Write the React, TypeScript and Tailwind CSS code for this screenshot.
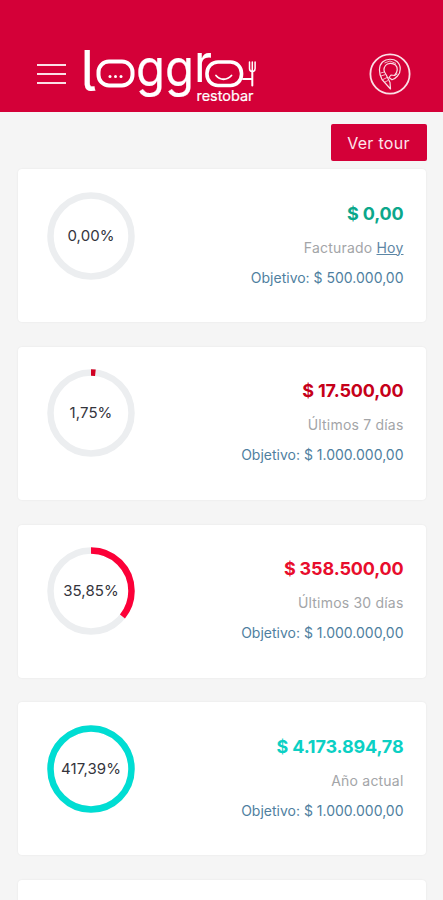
import React from "react";

type Goal = {
  percent: number;
  percentText: string;
  amount: string;
  label: string;
  link?: string;
  goal: string;
  amountClass: string;
  ringColor: string;
};

const goals: Goal[] = [
  {
    percent: 0,
    percentText: "0,00%",
    amount: "$ 0,00",
    label: "Facturado",
    link: "Hoy",
    goal: "$ 500.000,00",
    amountClass: "text-[#0ba78b]",
    ringColor: "#0ba78b",
  },
  {
    percent: 1.75,
    percentText: "1,75%",
    amount: "$ 17.500,00",
    label: "Últimos 7 días",
    goal: "$ 1.000.000,00",
    amountClass: "text-[#c60019]",
    ringColor: "#d00022",
  },
  {
    percent: 35.85,
    percentText: "35,85%",
    amount: "$ 358.500,00",
    label: "Últimos 30 días",
    goal: "$ 1.000.000,00",
    amountClass: "text-[#e80d2c]",
    ringColor: "#fc0038",
  },
  {
    percent: 100,
    percentText: "417,39%",
    amount: "$ 4.173.894,78",
    label: "Año actual",
    goal: "$ 1.000.000,00",
    amountClass: "text-[#0bd0c4]",
    ringColor: "#00ddd3",
  },
];

const Logo = () => (
  <svg
    className="overflow-visible"
    width="176"
    height="64"
    viewBox="80 45 176 64"
    fill="none"
    stroke="#fff"
    strokeLinecap="round"
    strokeLinejoin="round"
    aria-label="loggro restobar"
  >
    <g fill="#fff" strokeWidth="0.2" fontFamily="Inter, sans-serif">
      <text
        x="80.500"
        y="91"
        fontSize="56"
        style={{ fontFeatureSettings: '"cv05"' }}
      >
        l
      </text>
      <text x="136" y="85.500" fontSize="52" textLength="58" lengthAdjust="spacingAndGlyphs">
        gg
      </text>
      <text x="194" y="82" fontSize="53" strokeWidth="0" textLength="18" lengthAdjust="spacingAndGlyphs">
        r
      </text>
      <text x="196.500" y="101" fontSize="14" textLength="57" lengthAdjust="spacingAndGlyphs">
        restobar
      </text>
    </g>
    <rect x="98.500" y="61.500" width="34" height="24" rx="10.500" strokeWidth="4" />
    <g fill="#fff" stroke="none">
      <circle cx="110" cy="76.500" r="1.500" />
      <circle cx="115.500" cy="76.500" r="1.500" />
      <circle cx="121" cy="76.500" r="1.500" />
    </g>
    <rect x="207" y="62" width="34.500" height="23.500" rx="11" strokeWidth="3.600" />
    <path d="M216 75.500c4 5 11 5 15.500 0" strokeWidth="1.800" />
    <path d="M243 79h9M252.300 71v14.500" strokeWidth="2" />
    <path d="M249.500 62v6.500q0 3 2.800 3t2.800-3V62M252.300 62v8" strokeWidth="1.500" />
  </svg>
);

const Header = () => (
  <header className="flex h-28 shrink-0 items-start justify-between bg-[#d40038] pl-[37px] pr-8 pt-[45px]">
    <div className="flex">
      <button type="button" aria-label="Menu" className="mt-[19px] flex h-5 w-[29px] flex-col justify-between">
        <span className="h-0.5 w-full bg-[#fbdfe6]" />
        <span className="h-0.5 w-full bg-[#fbdfe6]" />
        <span className="h-0.5 w-full bg-[#fbdfe6]" />
      </button>
      <div className="ml-3.5">
        <Logo />
      </div>
    </div>
    <svg
      className="mt-2"
      width="42"
      height="42"
      viewBox="0 0 42 42"
      fill="none"
      stroke="#fbdfe6"
      strokeLinejoin="round"
    >
      <circle cx="21" cy="21" r="19.600" strokeWidth="1.800" />
      {/* folded ribbon: outer edge, inner edge and the knot on the right */}
      <path
        d="M21.500 36 13 26.500C9.500 20 9.500 13 13.500 9c4-3.700 11-3.500 14.500-.5 4.500 4 4 11 .5 14.500-1.500 1.700-3.500 3.200-5.500 3.800l-3-2.300 2-2.500 3.500.5c3.500-3.500 3.500-8 1-10.500-3-2.500-8-2-10 .5-2.300 3-1.500 6.500.5 9l4 8z"
        strokeWidth="1.200"
      />
      <path d="m11.500 20 4-1m-3.500 4 4.500-1.500m-2.500 5 4-2m-2 4.500 3-1.500M15.500 10l5.500-2 6 2.500m-1.500 12 3-1.500" strokeWidth=".8" />
    </svg>
  </header>
);

const Ring = ({ percent, text, color }: { percent: number; text: string; color: string }) => (
  <div className="grid h-[88px] w-[88px] place-items-center">
    <svg className="col-start-1 row-start-1 -rotate-90" width="88" height="88" viewBox="0 0 88 88" fill="none" strokeWidth="6.500">
      <circle cx="44" cy="44" r="40.500" stroke="#eceef0" />
      {percent > 0 && (
        <circle cx="44" cy="44" r="40.500" stroke={color} pathLength={100} strokeDasharray={`${percent} 100`} />
      )}
    </svg>
    <span className="col-start-1 row-start-1 text-[15px] leading-5 tracking-[0.100px] text-[#34343c]">{text}</span>
  </div>
);

const GoalCard = ({ item }: { item: Goal }) => (
  <section className="flex h-[153px] shrink-0 items-start justify-between rounded bg-white pl-[29.500px] pr-[22px] pt-[22.500px] shadow-[0_0_2px_rgba(0,0,0,0.08)]">
    <Ring percent={item.percent} text={item.percentText} color={item.ringColor} />
    <div className="flex flex-col items-end pt-2.5">
      <p className={`text-[18px] leading-6 font-bold tracking-[-0.150px] ${item.amountClass}`}>{item.amount}</p>
      <p className="mt-3 text-[14px] leading-5 tracking-[0.200px] text-[#a3a5a8]">
        {item.label}
        {item.link && (
          <>
            {" "}
            <a href="#" className="text-[#5d86a5] underline">{item.link}</a>
          </>
        )}
      </p>
      <p className="mt-2.5 text-[14px] leading-5 text-[#4f7f9f]">Objetivo: {item.goal}</p>
    </div>
  </section>
);

const App = () => {
  return (
    <div className="flex h-[900px] w-full flex-col overflow-hidden bg-[#f5f5f5] font-['Inter',sans-serif]">
      <Header />
      <main className="flex shrink-0 flex-col px-[17.500px] pt-3">
        <button
          type="button"
          className="mr-[-1px] h-[37px] w-[96px] self-end rounded-xs bg-[#d40038] text-[16px] tracking-[0.300px] text-[#fde5eb]"
        >
          Ver tour
        </button>
        <div className="mt-2 flex flex-col gap-[24.800px]">
          {goals.map((item) => (
            <GoalCard key={item.label} item={item} />
          ))}
          <section className="h-[153px] rounded bg-white shadow-[0_0_2px_rgba(0,0,0,0.08)]" />
        </div>
      </main>
    </div>
  );
};

export default App;
